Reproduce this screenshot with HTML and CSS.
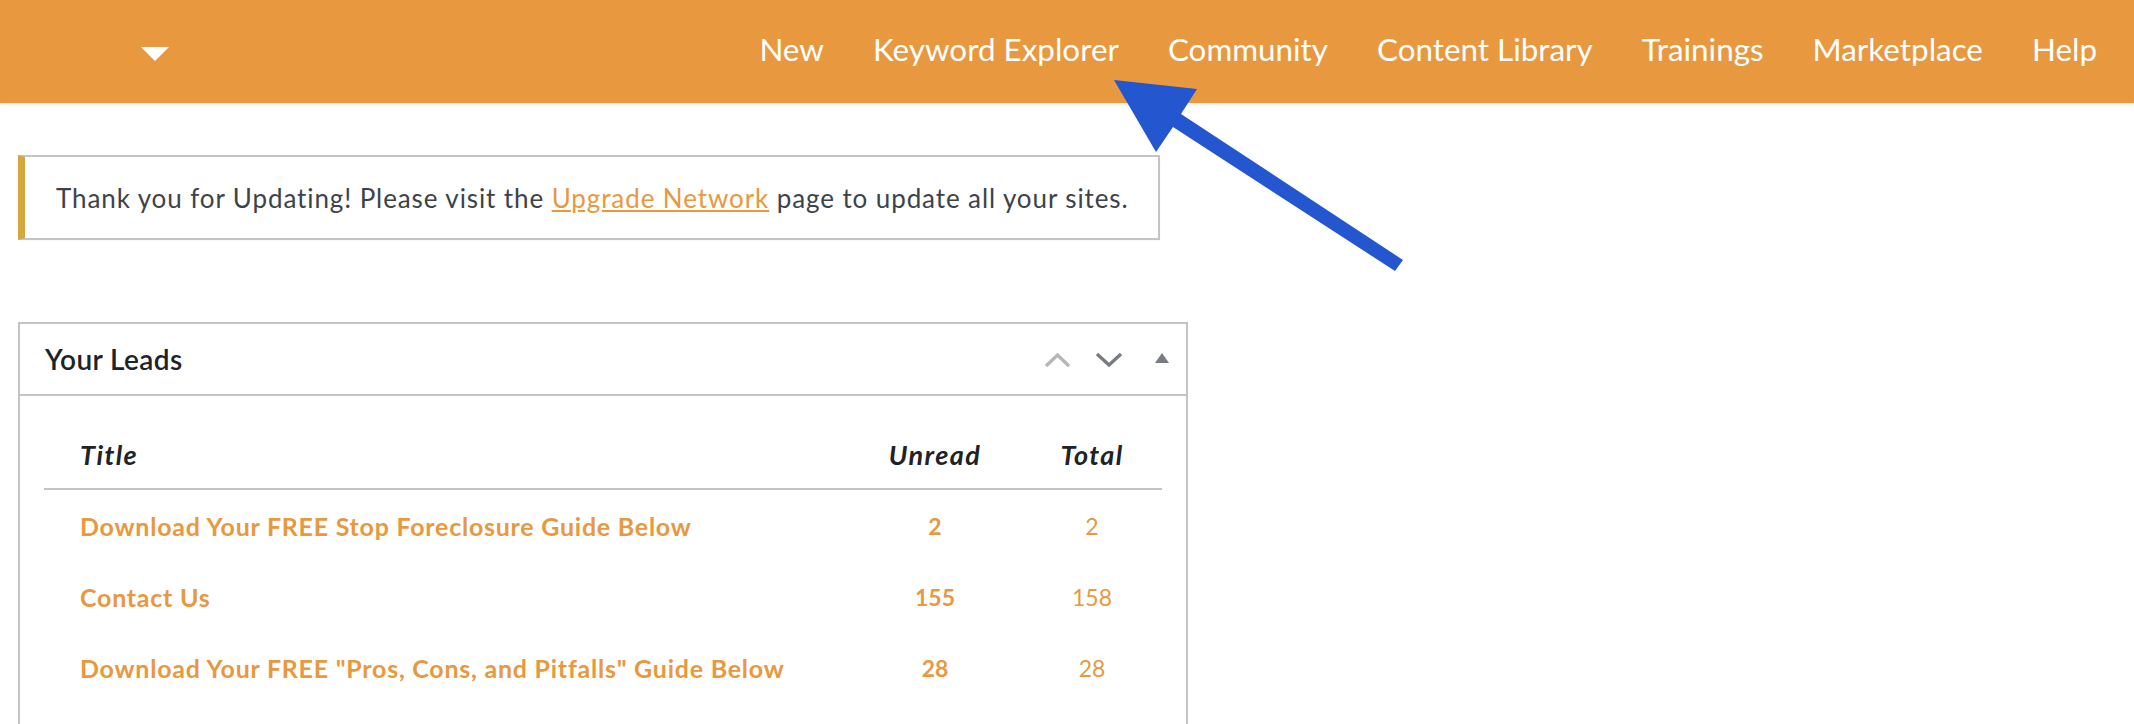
FILE: index.html
```
<!DOCTYPE html>
<html lang="en">
<head>
    <meta charset="UTF-8">
    <meta name="viewport" content="width=device-width, initial-scale=1.0">
    <title>Dashboard</title>
    <link rel="stylesheet" href="styles.css">
</head>
<body>
    <header class="topbar">
        <span class="site-toggle"></span>
        <nav class="main-nav">
            <a href="#">New</a>
            <a href="#">Keyword Explorer</a>
            <a href="#">Community</a>
            <a href="#">Content Library</a>
            <a href="#">Trainings</a>
            <a href="#">Marketplace</a>
            <a href="#">Help</a>
        </nav>
    </header>

    <!-- annotation arrow pointing at Keyword Explorer -->
    <svg class="callout-arrow" width="320" height="210" viewBox="0 0 320 210">
        <polygon points="14,10 97,19 81,44 303,190 295,201 73,57 56,82" fill="#2356cf"/>
    </svg>

    <main class="content">
        <div class="notice">
            <p>Thank you for Updating! Please visit the <a href="#">Upgrade Network</a> page to update all your sites.</p>
        </div>

        <div class="postbox">
            <div class="postbox-header">
                <h2>Your Leads</h2>
                <div class="handle-actions">
                    <svg class="handle up" width="27" height="16" viewBox="0 0 27 16"><polyline points="2,14 13.5,3 25,14" fill="none" stroke="#b4b6b9" stroke-width="3.4"/></svg>
                    <svg class="handle down" width="28" height="16" viewBox="0 0 28 16"><polyline points="2,2 14,13 26,2" fill="none" stroke="#787c82" stroke-width="3.4"/></svg>
                    <svg class="handle toggle" width="16" height="12" viewBox="0 0 16 12"><polygon points="8,1 15,11 1,11" fill="#787c82"/></svg>
                </div>
            </div>
            <div class="postbox-inside">
                <table class="leads-table">
                    <thead>
                        <tr>
                            <th class="col-title">Title</th>
                            <th class="col-unread">Unread</th>
                            <th class="col-total">Total</th>
                        </tr>
                    </thead>
                    <tbody>
                        <tr>
                            <td class="col-title"><a href="#">Download Your FREE Stop Foreclosure Guide Below</a></td>
                            <td class="col-unread">2</td>
                            <td class="col-total">2</td>
                        </tr>
                        <tr>
                            <td class="col-title"><a href="#">Contact Us</a></td>
                            <td class="col-unread">155</td>
                            <td class="col-total">158</td>
                        </tr>
                        <tr>
                            <td class="col-title"><a href="#">Download Your FREE "Pros, Cons, and Pitfalls" Guide Below</a></td>
                            <td class="col-unread">28</td>
                            <td class="col-total">28</td>
                        </tr>
                    </tbody>
                </table>
            </div>
        </div>
    </main>
</body>
</html>
```

FILE: styles.css
```
body {
    font-family: Lato, "Open Sans", sans-serif;
    background-color: #fff;
    margin: 0;
    padding: 0;
    color: #3c434a;
}
a {
    color: #e8983e;
}
.topbar {
    height: 103px;
    background-color: #e8983e;
    display: flex;
    align-items: center;
    justify-content: space-between;
    box-shadow: 0 2px 3px rgba(0,0,0,0.08);
}
.site-toggle {
    margin-left: 141px;
    margin-top: 5px;
    width: 0;
    height: 0;
    border-left: 14px solid transparent;
    border-right: 14px solid transparent;
    border-top: 14px solid #fff;
}
.main-nav {
    display: flex;
    gap: 49px;
    padding-right: 37px;
    margin-top: -5px;
}
.main-nav a {
    color: #fff;
    text-decoration: none;
    font-size: 31.4px;
}
.callout-arrow {
    position: absolute;
    left: 1100px;
    top: 70px;
    z-index: 5;
}
.content {
    padding: 52px 0 0 18px;
}
.notice {
    width: 1133px;
    height: 81px;
    border: 2px solid #c3c4c7;
    border-left: 7px solid #d4a83f;
    box-shadow: 0 1px 2px rgba(0,0,0,0.04);
    display: flex;
    align-items: center;
}
.notice p {
    margin: 0;
    padding-left: 31px;
    font-size: 26px;
    letter-spacing: 0.9px;
}
.postbox {
    margin-top: 82px;
    width: 1166px;
    border: 2px solid #c3c4c7;
    border-bottom: none;
    height: 420px;
}
.postbox-header {
    height: 70px;
    border-bottom: 2px solid #c3c4c7;
    display: flex;
    align-items: center;
    justify-content: space-between;
}
.postbox-header h2 {
    margin: 0 0 0 25px;
    font-size: 28px;
    font-weight: 600;
    letter-spacing: 0.4px;
    color: #1d2327;
}
.handle-actions {
    display: flex;
    align-items: center;
    margin-right: 16px;
    margin-top: 2px;
}
.handle.down {
    margin-left: 24px;
}
.handle.toggle {
    margin-left: 31px;
    margin-top: -4px;
}
.postbox-inside {
    padding: 24px 24px 0 24px;
}
.leads-table {
    width: 100%;
    border-collapse: collapse;
}
.leads-table th {
    height: 68px;
    padding: 0;
    font-size: 27px;
    font-style: italic;
    font-weight: 700;
    letter-spacing: 1.4px;
    color: #1d2327;
    border-bottom: 2px solid #c3c4c7;
}
.leads-table td {
    height: 71px;
    padding: 0;
    font-size: 23px;
    color: #e8983e;
}
.leads-table .col-title {
    text-align: left;
    padding-left: 36px;
}
.leads-table td.col-title a {
    font-size: 25px;
    font-weight: 700;
    letter-spacing: 0.75px;
    text-decoration: none;
}
.leads-table .col-unread {
    width: 174px;
    text-align: center;
}
.leads-table td.col-unread {
    font-weight: 700;
}
.leads-table .col-total {
    width: 140px;
    text-align: center;
}
```
